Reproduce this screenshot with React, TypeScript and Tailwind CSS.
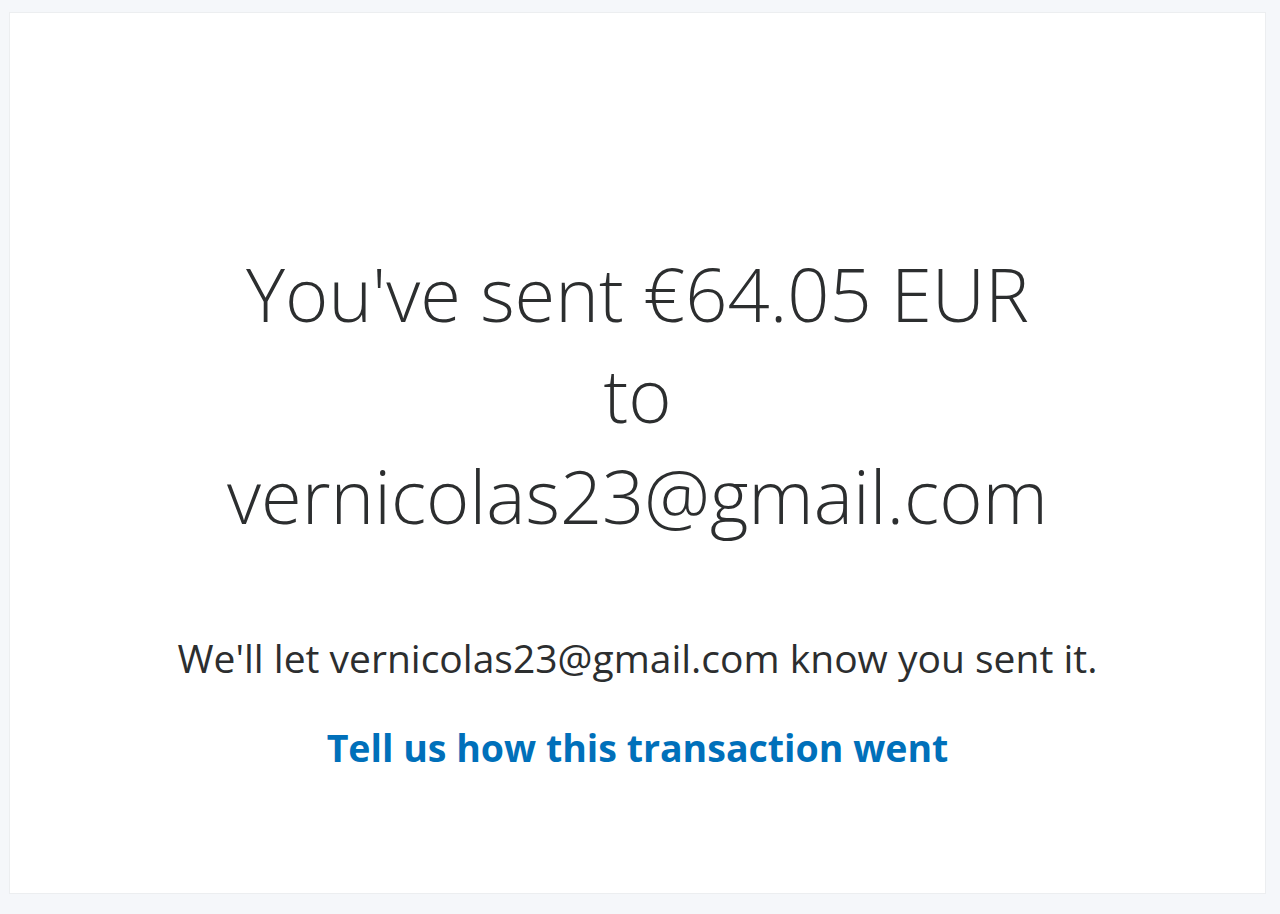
export default function App() {
    return (
        <main className="min-h-screen bg-[#f5f7fa] pt-[12px] pl-[9px] pr-[14px] pb-[20px] font-['Open_Sans',sans-serif]">
            <div className="h-[882px] bg-white border border-[#eceef0] flex flex-col items-center text-center">
                <h1 className="mt-[230px] text-[74px] leading-[101px] font-light text-[#2c2e2f]">
                    You've sent €64.05 EUR
                    <br />
                    to
                    <br />
                    vernicolas23@gmail.com
                </h1>
                <p className="mt-[88px] text-[39px] leading-[48px] text-[#2c2e2f]">
                    We'll let vernicolas23@gmail.com know you sent it.
                </p>
                <a href="#" className="mt-[42px] text-[37.5px] leading-[48px] font-bold text-[#0070ba]">
                    Tell us how this transaction went
                </a>
            </div>
        </main>
    );
}
